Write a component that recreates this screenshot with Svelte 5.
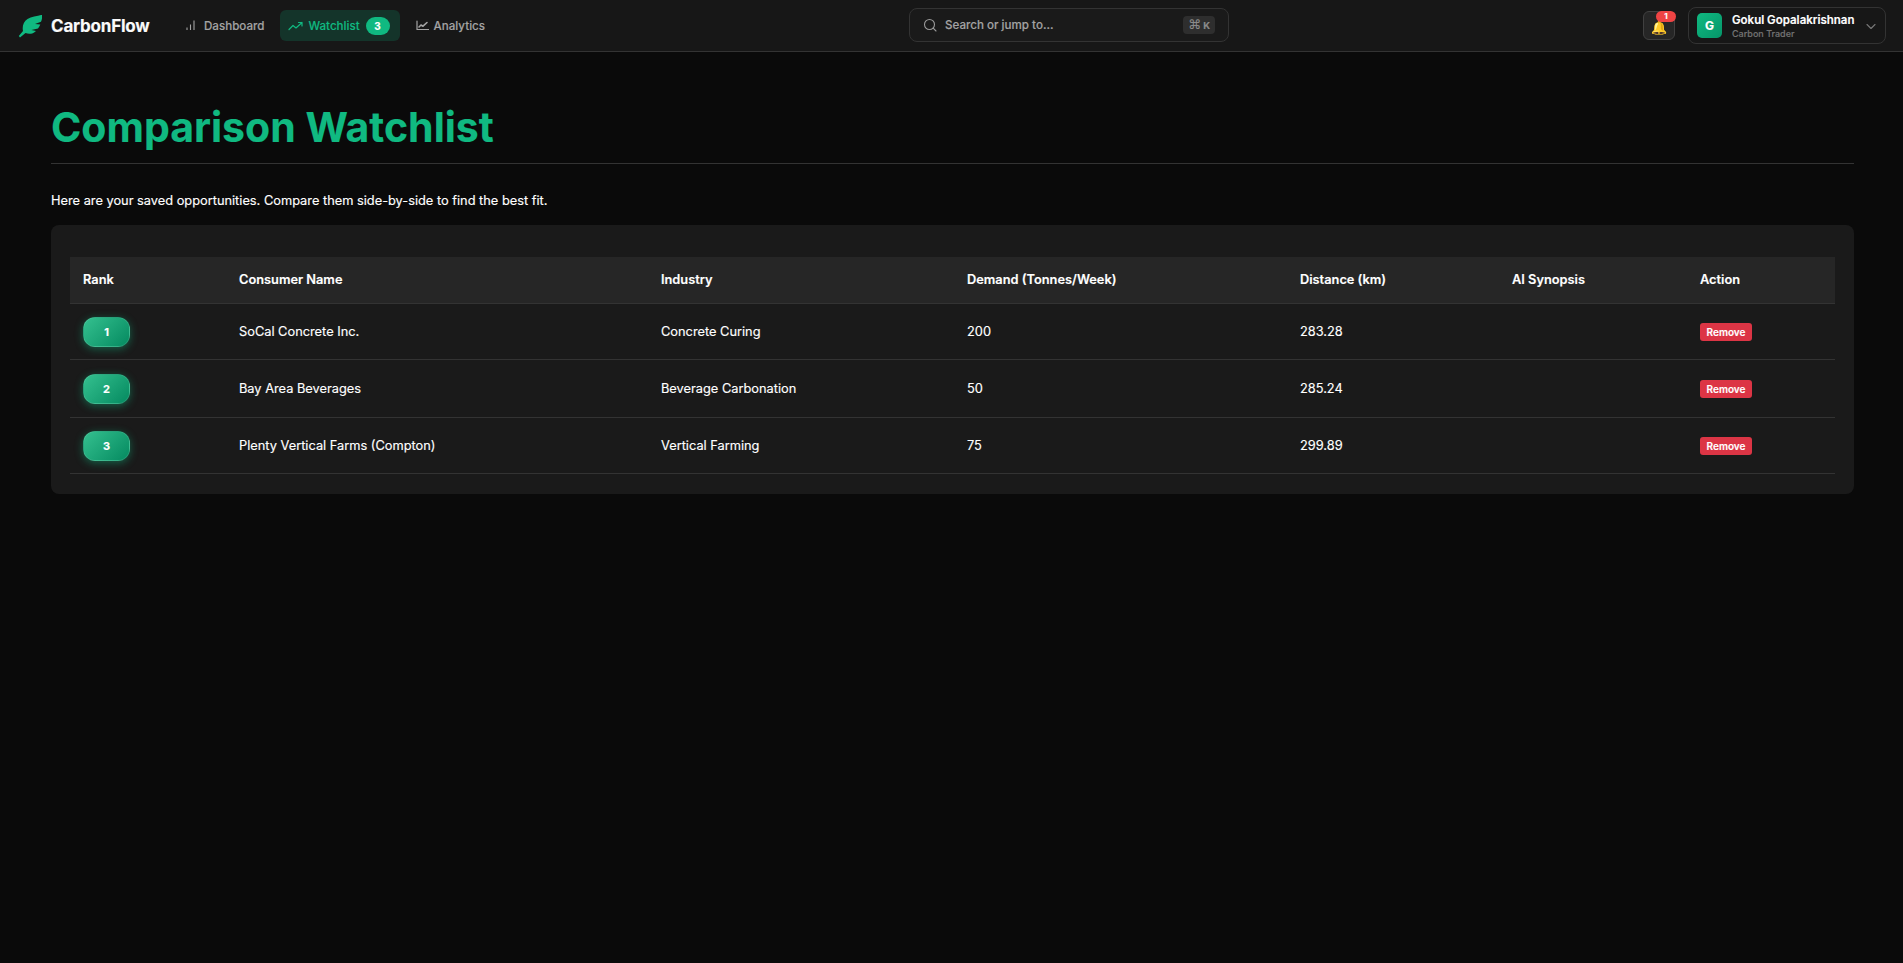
<script>
  const items = [
    { rank: 1, name: 'SoCal Concrete Inc.', industry: 'Concrete Curing', demand: 200, distance: '283.28' },
    { rank: 2, name: 'Bay Area Beverages', industry: 'Beverage Carbonation', demand: 50, distance: '285.24' },
    { rank: 3, name: 'Plenty Vertical Farms (Compton)', industry: 'Vertical Farming', demand: 75, distance: '299.89' }
  ];
</script>

<header class="navbar">
  <div class="brand">
    <svg class="leaf" width="24" height="24" viewBox="0 0 24 24">
      <path d="M24.500 0.500 C19 2 13.500 2.500 9.500 5 C5.500 7.500 4 12.500 5 17 L0.800 22 L2 23.500 L7.500 19 C11 20.500 15 20 18 17 L13.500 16 L20 14.500 C21 13.300 21.800 12 22.300 10.500 L17 10 L23 7.800 C24 5.500 24.300 3 24.500 0.500 Z" fill="#10b981"/>
    </svg>
    <span class="brand-name">CarbonFlow</span>
  </div>

  <nav class="nav-links">
    <a class="nav-item">
      <svg width="15" height="15" viewBox="0 0 15 15" fill="none" stroke="currentColor" stroke-width="1.100"><path d="M3 12V9.500M6.500 12V6.500M10 12V2.500"/></svg>
      Dashboard
    </a>
    <a class="nav-item active">
      <svg width="15" height="15" viewBox="0 0 15 15" fill="none" stroke="currentColor" stroke-width="1.200" stroke-linecap="round" stroke-linejoin="round"><path d="M1 11.500l4-4 3 2.500 6-5.500M10.500 4.500H14V8"/></svg>
      Watchlist
      <span class="count">3</span>
    </a>
    <a class="nav-item">
      <svg width="15" height="15" viewBox="0 0 15 15" fill="none" stroke="currentColor" stroke-width="1.200" stroke-linecap="round" stroke-linejoin="round"><path d="M3 3v8.500h11.500"/><path d="M5 9l2-2 2 1.200 4-3.700" stroke-width="1.600"/></svg>
      Analytics
    </a>
  </nav>

  <div class="search">
    <svg width="14" height="14" viewBox="0 0 14 14" fill="none" stroke="#9a9a9a" stroke-width="1.100" stroke-linecap="round"><circle cx="6.500" cy="6.500" r="5"/><path d="M10.200 10.200L13 13"/></svg>
    <span class="search-text">Search or jump to...</span>
    <kbd><span class="cmd">⌘</span> K</kbd>
  </div>

  <div class="right">
    <button class="bell">
      <span class="bell-icon">🔔</span>
      <span class="bell-badge">1</span>
    </button>
    <div class="user">
      <div class="avatar">G</div>
      <div class="user-info">
        <span class="user-name">Gokul Gopalakrishnan</span>
        <span class="user-role">Carbon Trader</span>
      </div>
      <svg class="chev" width="12" height="12" viewBox="0 0 12 12" fill="none" stroke="#777" stroke-width="1.100" stroke-linecap="round" stroke-linejoin="round"><path d="M2 4.500l4 4 4-4"/></svg>
    </div>
  </div>
</header>

<main class="page">
  <h1>Comparison Watchlist</h1>
  <p class="lead">Here are your saved opportunities. Compare them side-by-side to find the best fit.</p>

  <section class="card">
    <table>
      <colgroup>
        <col class="c-rank" /><col class="c-name" /><col class="c-ind" /><col class="c-dem" /><col class="c-dist" /><col class="c-ai" /><col class="c-act" />
      </colgroup>
      <thead>
        <tr>
          <th>Rank</th>
          <th>Consumer Name</th>
          <th>Industry</th>
          <th>Demand (Tonnes/Week)</th>
          <th>Distance (km)</th>
          <th>AI Synopsis</th>
          <th>Action</th>
        </tr>
      </thead>
      <tbody>
        {#each items as item}
          <tr>
            <td><span class="rank">{item.rank}</span></td>
            <td>{item.name}</td>
            <td>{item.industry}</td>
            <td>{item.demand}</td>
            <td>{item.distance}</td>
            <td></td>
            <td><button class="remove">Remove</button></td>
          </tr>
        {/each}
      </tbody>
    </table>
  </section>
</main>

<style>
  :global(body) {
    background: #0a0a0a;
    color: #fff;
    font-family: Inter, "Liberation Sans", sans-serif;
    -webkit-text-stroke: 0.15px;
  }

  .navbar {
    height: 51px;
    background: #171717;
    border-bottom: 1px solid #333;
    display: flex;
    align-items: center;
    padding: 0 17px 0 18px;
    position: relative;
  }

  .brand {
    display: flex;
    align-items: center;
    gap: 9px;
    width: 158px;
    flex: none;
  }

  .brand-name {
    font-size: 17px;
    font-weight: 700;
    letter-spacing: -0.2px;
    color: #fafafa;
  }

  .nav-links {
    display: flex;
    align-items: center;
    gap: 6px;
  }

  .nav-item {
    display: flex;
    align-items: center;
    gap: 5px;
    height: 31px;
    padding: 0 10px 0 8px;
    border-radius: 6px;
    font-size: 11.600px;
    font-weight: 500;
    color: #a3a3a3;
  }

  .nav-item.active {
    background: #14342a;
    color: #10b981;
  }

  .count {
    background: #10b981;
    color: #fff;
    font-size: 10px;
    font-weight: 700;
    width: 24px;
    height: 18px;
    margin-left: 1px;
    border-radius: 9px;
    display: flex;
    align-items: center;
    justify-content: center;
  }

  .search {
    position: absolute;
    left: 909px;
    top: 8px;
    width: 320px;
    height: 34px;
    box-sizing: border-box;
    border: 1px solid #333;
    border-radius: 8px;
    display: flex;
    align-items: center;
    padding: 0 13px;
    gap: 8px;
    background: #1a1a1a;
  }

  .search-text {
    font-size: 11.600px;
    font-weight: 500;
    color: #a3a3a3;
    flex: 1;
  }

  kbd {
    font-family: Inter, "DejaVu Sans", sans-serif;
    font-size: 9.500px;
    font-weight: 700;
    color: #8a8a8a;
    background: #2e2e2e;
    border-radius: 4px;
    width: 32px;
    height: 18px;
    line-height: 18px;
    text-align: center;
  }

  .cmd {
    font-size: 13px;
    font-weight: 400;
    font-family: "DejaVu Sans", sans-serif;
  }

  .right {
    margin-left: auto;
    display: flex;
    align-items: center;
    gap: 13px;
  }

  .bell {
    position: relative;
    width: 32px;
    height: 29px;
    padding: 0;
    background: #262626;
    border: 1px solid #404040;
    border-radius: 6px;
    display: flex;
    align-items: center;
    justify-content: center;
  }

  .bell-icon {
    font-size: 13px;
    line-height: 1;
    color: #fbbf24;
    padding-top: 3px;
    font-family: "Noto Color Emoji", "DejaVu Sans", sans-serif;
  }

  .bell-badge {
    position: absolute;
    top: -1px;
    right: -2px;
    width: 20px;
    height: 11px;
    background: #ef4444;
    border-radius: 6px;
    font-size: 8px;
    font-weight: 700;
    color: #fff;
    line-height: 11px;
    text-align: center;
    font-family: Inter, sans-serif;
  }

  .user {
    width: 198px;
    height: 37px;
    box-sizing: border-box;
    border: 1px solid #333;
    border-radius: 8px;
    display: flex;
    align-items: center;
    padding: 0 8px;
    gap: 10px;
  }

  .avatar {
    width: 25px;
    height: 25px;
    border-radius: 5px;
    background: linear-gradient(135deg, #10b981, #059669);
    display: flex;
    align-items: center;
    justify-content: center;
    font-size: 12px;
    font-weight: 700;
    flex: none;
  }

  .user-info {
    display: flex;
    flex-direction: column;
    flex: none;
    width: 123px;
    gap: 1px;
  }

  .user-name {
    font-size: 11.500px;
    font-weight: 600;
    line-height: 14px;
    white-space: nowrap;
  }

  .user-role {
    font-size: 9px;
    font-weight: 500;
    line-height: 11px;
    color: #737373;
  }

  .page {
    padding: 50px 49px 0 51px;
  }

  h1 {
    margin: 0;
    font-size: 41px;
    line-height: 50px;
    font-weight: 700;
    color: #10b981;
    padding-bottom: 11px;
    border-bottom: 1px solid #333;
  }

  .lead {
    margin: 28px 0 0 0;
    font-size: 12.800px;
    line-height: 17px;
    color: #fff;
  }

  .card {
    margin-top: 16px;
    background: #1a1a1a;
    border-radius: 8px;
    padding: 32px 19px 20px;
  }

  table {
    width: 100%;
    table-layout: fixed;
    border-collapse: collapse;
    font-size: 12.800px;
  }

  .c-rank { width: 155px; }
  .c-name { width: 422px; }
  .c-ind { width: 306px; }
  .c-dem { width: 333px; }
  .c-dist { width: 212px; }
  .c-ai { width: 188px; }

  th {
    background: #262626;
    height: 46px;
    box-sizing: border-box;
    padding: 0 14px;
    text-align: left;
    font-weight: 600;
    border-bottom: 1px solid #333;
    color: #fff;
  }

  th:first-child,
  td:first-child {
    padding-left: 13px;
  }

  td {
    height: 56.500px;
    box-sizing: border-box;
    padding: 0 14px;
    border-bottom: 1px solid #333;
    color: #fff;
    font-weight: 400;
  }

  tr:nth-child(2) td {
    height: 57.500px;
  }

  .rank {
    display: flex;
    align-items: center;
    justify-content: center;
    width: 47px;
    height: 30px;
    margin-top: 1px;
    box-sizing: border-box;
    border: 1px solid rgba(255, 255, 255, 0.1);
    border-radius: 12px;
    background: linear-gradient(135deg, #34c08f, #058a60);
    box-shadow: 0 2px 8px rgba(16, 185, 129, 0.45);
    font-size: 11px;
    font-weight: 700;
    color: #fff;
  }

  .remove {
    display: block;
    border: none;
    background: #dc3545;
    color: #fff;
    border-radius: 3px;
    width: 52px;
    height: 18px;
    margin-top: 1px;
    padding: 0;
    font-family: Inter, sans-serif;
    font-size: 10px;
    font-weight: 600;
  }
</style>
